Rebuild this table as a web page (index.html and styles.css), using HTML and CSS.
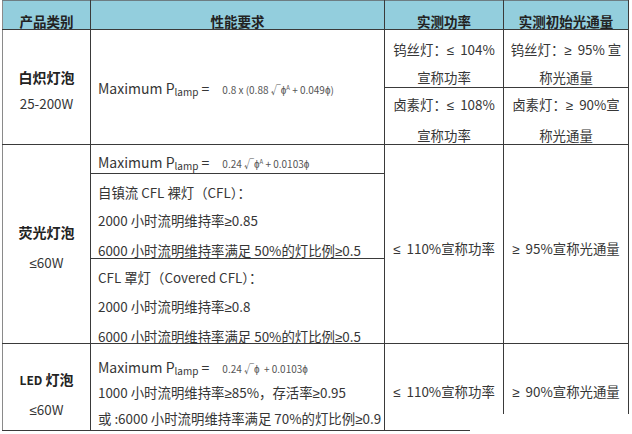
FILE: index.html
```html
<!DOCTYPE html>
<html lang="zh-CN">
<head>
<meta charset="utf-8">
<link rel="stylesheet" href="styles.css">
</head>
<body>
<div class="page">
<table class="spec">
  <colgroup>
    <col class="c1"><col class="c2"><col class="c3"><col class="c4">
  </colgroup>
  <thead>
    <tr class="hrow">
      <th><div class="hin">产品类别</div></th>
      <th><div class="hin">性能要求</div></th>
      <th><div class="hin">实测功率</div></th>
      <th><div class="hin">实测初始光通量</div></th>
    </tr>
  </thead>
  <tbody>
    <tr class="r1a">
      <td class="cat p1" rowspan="2"><div class="in"><div class="name">白炽灯泡</div><div>25-200W</div></div></td>
      <td class="req p2" rowspan="2"><div class="in"><span class="mx">Maximum P<sub>lamp</sub> =</span> <span class="f">0.8 x (0.88 √ɸ<sup>A</sup> + 0.049ɸ)</span></div></td>
      <td class="val p3"><div class="in">钨丝灯<span class="tc">：</span><span class="m">≤</span>&nbsp; 104%<br>宣称功率</div></td>
      <td class="val p3"><div class="in">钨丝灯<span class="tc">：</span><span class="m">≥</span>&nbsp; 95% 宣<br>称光通量</div></td>
    </tr>
    <tr class="r1b">
      <td class="val p4"><div class="in">卤素灯<span class="tc">：</span><span class="m">≤</span>&nbsp; 108%<br>宣称功率</div></td>
      <td class="val p4"><div class="in">卤素灯<span class="tc">：</span><span class="m">≥</span>&nbsp; 90%宣<br>称光通量</div></td>
    </tr>
    <tr class="r2a">
      <td class="cat p5" rowspan="3"><div class="in"><div class="name">荧光灯泡</div><div><span class="m">≤</span>60W</div></div></td>
      <td class="req p6"><div class="in"><span class="mx">Maximum P<sub>lamp</sub> =</span> <span class="f">0.24 √ɸ<sup>A</sup> + 0.0103ɸ</span></div></td>
      <td class="val p7" rowspan="3"><div class="in"><span class="m">≤</span>&nbsp; 110%宣称功率</div></td>
      <td class="val p7" rowspan="3"><div class="in"><span class="m">≥</span>&nbsp; 95%宣称光通量</div></td>
    </tr>
    <tr class="r2b">
      <td class="req p8"><div class="in">自镇流 CFL 裸灯（CFL）<span class="tc">：</span><br>2000 小时流明维持率<span class="m">≥</span>0.85<br>6000 小时流明维持率满足 50%的灯比例<span class="m">≥</span>0.5</div></td>
    </tr>
    <tr class="r2c">
      <td class="req p9"><div class="in">CFL 罩灯（Covered CFL）<span class="tc">：</span><br>2000 小时流明维持率<span class="m">≥</span>0.8<br>6000 小时流明维持率满足 50%的灯比例<span class="m">≥</span>0.5</div></td>
    </tr>
    <tr class="r3">
      <td class="cat p10"><div class="in"><div class="name"><span class="led">LED</span> 灯泡</div><div><span class="m">≤</span>60W</div></div></td>
      <td class="req p11"><div class="in"><span class="mx">Maximum P<sub>lamp</sub> =</span> <span class="f">0.24 √ɸ&nbsp; + 0.0103ɸ</span><br>1000 小时流明维持率<span class="m">≥</span>85%，存活率<span class="m">≥</span>0.95<br>或 :6000 小时流明维持率满足 70%的灯比例<span class="m">≥</span>0.9</div></td>
      <td class="val p12"><div class="in"><span class="m">≤</span>&nbsp; 110%宣称功率</div></td>
      <td class="val p12"><div class="in"><span class="m">≥</span>&nbsp; 90%宣称光通量</div></td>
    </tr>
  </tbody>
</table>
<div class="mask"></div>
</div>
</body>
</html>
```
FILE: styles.css
```css
html, body {
  margin: 0;
  padding: 0;
  background: #ffffff;
}
.page {
  position: relative;
  width: 632px;
  height: 434px;
  overflow: hidden;
  padding-left: 2px;
  box-sizing: border-box;
}
.spec {
  border-collapse: collapse;
  table-layout: fixed;
  width: 626px;
  font-family: "Noto Sans CJK SC", sans-serif;
  font-size: 13.4px;
  color: #363636;
}
.c1 { width: 88px; }
.c2 { width: 294px; }
.c3 { width: 119px; }
.c4 { width: 125px; }
.spec th, .spec td {
  border: 1px solid #3a3a3a;
  padding: 0;
  vertical-align: top;
}
.spec th {
  background: #93cedd;
  color: #222222;
  font-weight: bold;
  font-size: 13.5px;
  line-height: 20px;
  text-align: center;
  padding-top: 10px;
  border-top: 1px solid #6d7d83;
}
.hin {
  margin-bottom: -40px;
}
.spec tr > :first-child {
  border-left: 1px solid #8a8a8a;
}
.hrow { height: 29px; }
.r1a { height: 58px; }
.r1b { height: 57px; }
.r2a { height: 29px; }
.r2b { height: 85px; }
.r2c { height: 85px; }
.r3 { height: 87px; }

.in {
  margin-bottom: -80px;
}
.cat { text-align: center; }
.req { text-align: left; padding-left: 7px !important; }
.val { text-align: center; }

.name {
  font-weight: bold;
  color: #222222;
  font-size: 14px;
}
.led {
  font-size: 12px;
}
.m {
  font-family: "Liberation Sans", sans-serif;
}
.tc {
  font-family: "Noto Sans CJK TC", sans-serif;
}
.mx {
  font-size: 14px;
}

/* row 1 */
.p1 { padding-top: 35px !important; line-height: 25.5px; }
.p2 { padding-top: 45px !important; line-height: 27px; }
.p3 { padding-top: 6px !important; line-height: 27px; }
.p4 { padding-top: 2px !important; line-height: 28.5px; }
/* row 2 */
.p5 { padding-top: 73px !important; line-height: 29.5px; }
.p6 { padding-top: 4px !important; line-height: 27px; }
.p7 { padding-top: 90px !important; line-height: 27px; }
.p8 { padding-top: 4px !important; line-height: 28px; }
.p9 { padding-top: 4px !important; line-height: 28.5px; }
/* row 3 */
.p10 { padding-top: 21px !important; line-height: 28.5px; }
.p11 { padding-top: 11px !important; line-height: 24.5px; }
.p12 { padding-top: 34px !important; line-height: 27px; }

sub {
  font-size: 10px;
  vertical-align: -2px;
  line-height: 0;
}
.f {
  font-size: 10px;
  line-height: 0;
  color: #555555;
  margin-left: 10px;
}
.f sup {
  font-size: 6px;
  vertical-align: 4px;
  line-height: 0;
}
.mask {
  position: absolute;
  left: 470px;
  top: 414px;
  width: 162px;
  height: 20px;
  background: #ffffff;
}
```
